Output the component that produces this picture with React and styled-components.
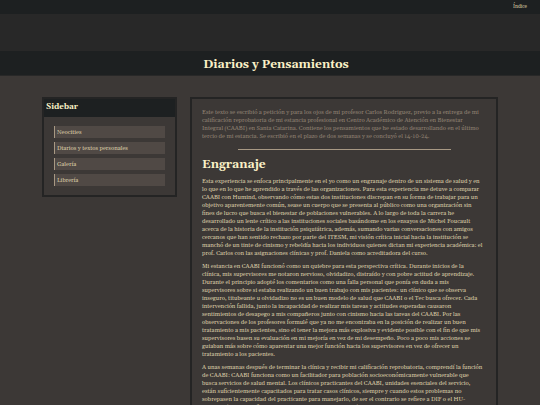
import styled, { createGlobalStyle } from "styled-components"

const GlobalStyle = createGlobalStyle`
  * {
    box-sizing: border-box;
  }

  body {
    margin: 0;
    background: #3c3836;
    color: #ddcea8;
    font-family: Georgia, Gelasio, "Liberation Serif", serif;
    font-size: 6px;
    line-height: 8px;
  }
`

const TopBar = styled.nav`
  display: flex;
  justify-content: flex-end;
  padding: 3px 13px;
  background: #1d2021;
`

const TopLink = styled.a`
  color: #ddcea8;
  font-size: 5px;
  text-decoration: none;
`

const Banner = styled.div`
  height: 37px;
  background: #282828;
`

const TitleBar = styled.header`
  padding: 4px 0 0 12px;
  background: #1d2021;
  border-bottom: 1px solid #282828;
  text-align: center;
`

const Title = styled.h1`
  margin: 0;
  color: #fbf1c7;
  font-size: 12px;
  line-height: 20px;
`

const Container = styled.div`
  display: flex;
  align-items: flex-start;
  gap: 13px;
  margin: 21px 42px;
`

const Sidebar = styled.aside`
  flex: 0 0 135px;
  border: 2px solid #242424;
`

const SidebarTitle = styled.h2`
  margin: 0;
  padding: 1px 2px 3px;
  background: #1d2021;
  color: #fbf1c7;
  font-size: 8px;
  line-height: 14px;
`

const LinkList = styled.ul`
  display: flex;
  flex-direction: column;
  gap: 4px;
  margin: 0;
  padding: 9px 10px;
  list-style: none;
`

const SidebarLink = styled.a`
  display: block;
  padding: 2px;
  background: #504945;
  border-left: 1px solid #a89984;
  color: #ddcea8;
  text-decoration: none;
`

const Article = styled.main`
  flex: 1;
  min-width: 0;
  padding: 9px 10px;
  border: 2px solid #242424;
`

const Paragraph = styled.p`
  margin: 0 0 5px;
  color: ${props => props.$muted ? "#928374" : "#ddcea8"};
  white-space: pre-line;
`

const Divider = styled.hr`
  width: 75%;
  height: 1px;
  margin: 9px auto 7px;
  border: 0;
  background: #a89984;
`

const Heading = styled.h2`
  margin: 0 0 4px;
  color: #fbf1c7;
  font-size: 12px;
  line-height: 16px;
`

const links = ["Neocities", "Diarios y textos personales", "Galería", "Librería"]

const intro = `Este texto se escribió a petición y para los ojos de mi profesor Carlos Rodriguez, previo a la entrega de mi
calificación reprobatoria de mi estancia profesional en Centro Académico de Atención en Bienestar
Integral (CAABI) en Santa Catarina. Contiene los pensamientos que he estado desarrollando en el último
tercio de mi estancia. Se escribió en el plazo de dos semanas y se concluyó el 14-10-24.`

const paragraphs = [
  `Esta experiencia se enfoca principalmente en el yo como un engranaje dentro de un sistema de salud y en
lo que en lo que he aprendido a través de las organizaciones. Para esta experiencia me detuve a comparar
CAABI con Humind, observando cómo estas dos instituciones discrepan en su forma de trabajar para un
objetivo aparentemente común, sease un cuerpo que se presenta al público como una organización sin
fines de lucro que busca el bienestar de poblaciones vulnerables. A lo largo de toda la carrera he
desarrollado un lente crítico a las instituciones sociales basándome en los ensayos de Michel Foucault
acerca de la historia de la institución psiquiátrica, además, sumando varias conversaciones con amigos
cercanos que han sentido rechazo por parte del ITESM, mi visión crítica inicial hacia la institución se
manchó de un tinte de cinismo y rebeldía hacia los individuos quienes dictan mi experiencia académica: el
prof. Carlos con las asignaciones clínicas y prof. Daniela como acreditadora del curso.`,
  `Mi estancia en CAABI funcionó como un quiebre para esta perspectiva crítica. Durante inicios de la
clínica, mis supervisores me notaron nervioso, olvidadizo, distraído y con pobre actitud de aprendizaje.
Durante el principio adopté los comentarios como una falla personal que ponía en duda a mis
supervisores sobre si estaba realizando un buen trabajo con mis pacientes: un clínico que se observa
inseguro, titubeante u olvidadizo no es un buen modelo de salud que CAABI o el Tec busca ofrecer. Cada
intervención fallida, junto la incapacidad de realizar mis tareas y actitudes esperadas causaron
sentimientos de desapego a mis compañeros junto con cinismo hacia las tareas del CAABI. Por las
observaciones de los profesores formulé que ya no me encontraba en la posición de realizar un buen
tratamiento a mis pacientes, sino el tener la mejora más explosiva y evidente posible con el fin de que mis
supervisores basen su evaluación en mi mejoría en vez de mi desempeño. Poco a poco mis acciones se
guiaban más sobre cómo aparentar una mejor función hacia los supervisores en vez de ofrecer un
tratamiento a los pacientes.`,
  `A unas semanas después de terminar la clínica y recibir mi calificación reprobatoria, comprendí la función
de CAABI: CAABI funciona como un facilitador para población socioeconómicamente vulnerable que
busca servicios de salud mental. Los clínicos practicantes del CAABI, unidades esenciales del servicio,
están suficientemente capacitados para tratar casos clínicos, siempre y cuando estos problemas no
sobrepasen la capacidad del practicante para manejarlo, de ser el contrario se refiere a DIF o el HU-
Psiquiatría. No significa que los practicantes sean malos clínicos, sino que hay casos`
]

export default function App() {
  return (
    <>
      <GlobalStyle />
      <TopBar>
        <TopLink href="#indice">Índice</TopLink>
      </TopBar>
      <Banner />
      <TitleBar>
        <Title>Diarios y Pensamientos</Title>
      </TitleBar>
      <Container>
        <Sidebar>
          <SidebarTitle>Sidebar</SidebarTitle>
          <LinkList>
            {links.map(link => (
              <li key={link}>
                <SidebarLink href="#">{link}</SidebarLink>
              </li>
            ))}
          </LinkList>
        </Sidebar>
        <Article>
          <Paragraph $muted>{intro}</Paragraph>
          <Divider />
          <Heading>Engranaje</Heading>
          {paragraphs.map((text, i) => (
            <Paragraph key={i}>{text}</Paragraph>
          ))}
        </Article>
      </Container>
    </>
  )
}
